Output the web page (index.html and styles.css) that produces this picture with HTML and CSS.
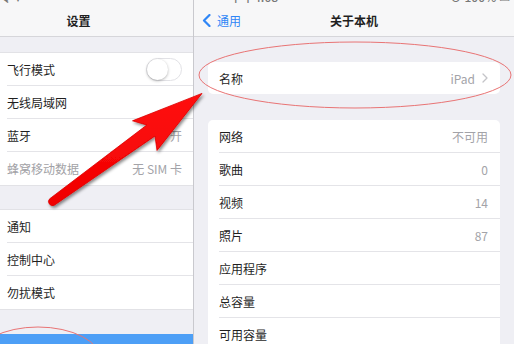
FILE: index.html
```html
<!DOCTYPE html>
<html lang="zh-CN">
<head>
    <meta charset="UTF-8">
    <meta name="viewport" content="width=device-width, initial-scale=1.0">
    <title>关于本机</title>
    <link rel="stylesheet" href="styles.css">
</head>
<body>
    <div class="screen">
        <!-- Settings sidebar -->
        <div class="sidebar">
            <div class="topbar">
                <div class="status"><span class="status-left">令 ▾</span></div>
                <div class="title">设置</div>
            </div>

            <div class="group first">
                <div class="row"><div class="row-inner"><span>飞行模式</span><span class="toggle"><span class="knob"></span></span></div></div>
                <div class="row"><div class="row-inner"><span>无线局域网</span></div></div>
                <div class="row"><div class="row-inner"><span>蓝牙</span><span class="value">开</span></div></div>
                <div class="row"><div class="row-inner last"><span class="muted">蜂窝移动数据</span><span class="value">无 SIM 卡</span></div></div>
            </div>

            <div class="group">
                <div class="row"><div class="row-inner"><span>通知</span></div></div>
                <div class="row"><div class="row-inner"><span>控制中心</span></div></div>
                <div class="row"><div class="row-inner last"><span>勿扰模式</span></div></div>
            </div>

            <div class="selected-row"></div>
        </div>

        <!-- Detail pane -->
        <div class="detail">
            <div class="topbar">
                <div class="status"><span class="status-time">下午4:08</span><span class="status-right">⊙ 100% ▭</span></div>
                <div class="title-row">
                    <span class="back">
                        <svg width="9" height="13" viewBox="0 0 9 13"><path d="M7.5 1 L2 6.5 L7.5 12" fill="none" stroke="#2f86f6" stroke-width="2.2" stroke-linecap="round" stroke-linejoin="round"/></svg>
                        通用
                    </span>
                    <span class="title">关于本机</span>
                </div>
            </div>

            <div class="card name-card">
                <div class="item"><div class="item-inner last">
                    <span>名称</span>
                    <span class="value">iPad
                        <svg class="chevron" width="6" height="10" viewBox="0 0 6 10"><path d="M1 1 L5 5 L1 9" fill="none" stroke="#c4c4c8" stroke-width="1.3" stroke-linecap="round" stroke-linejoin="round"/></svg>
                    </span>
                </div></div>
            </div>

            <div class="card info-card">
                <div class="item"><div class="item-inner"><span>网络</span><span class="value">不可用</span></div></div>
                <div class="item"><div class="item-inner"><span>歌曲</span><span class="value">0</span></div></div>
                <div class="item"><div class="item-inner"><span>视频</span><span class="value">14</span></div></div>
                <div class="item"><div class="item-inner"><span>照片</span><span class="value">87</span></div></div>
                <div class="item"><div class="item-inner"><span>应用程序</span><span class="value"></span></div></div>
                <div class="item"><div class="item-inner"><span>总容量</span><span class="value"></span></div></div>
                <div class="item"><div class="item-inner last"><span>可用容量</span><span class="value"></span></div></div>
            </div>
        </div>

        <!-- Annotation drawn over the screenshot -->
        <svg class="markup" width="514" height="344" viewBox="0 0 514 344">
            <defs>
                <filter id="shade" x="-10%" y="-10%" width="120%" height="130%">
                    <feDropShadow dx="1.5" dy="2" stdDeviation="1.6" flood-color="#000" flood-opacity="0.45"/>
                </filter>
                <linearGradient id="red" x1="0" y1="0" x2="0" y2="1">
                    <stop offset="0" stop-color="#ff1010"/>
                    <stop offset="1" stop-color="#f00000"/>
                </linearGradient>
            </defs>
            <ellipse cx="355" cy="75" rx="156" ry="33" fill="none" stroke="#e97474" stroke-width="1"/>
            <ellipse cx="38" cy="360" rx="63" ry="33" fill="none" stroke="#e97474" stroke-width="1"/>
            <path d="M49.7 198.8 L146.8 125 L132.5 120.8 L202 93.4 L157 150.5 L155 136 L54.3 205.2 A4 4 0 0 1 49.7 198.8 Z"
                  fill="url(#red)" stroke="#dc0000" stroke-width="0.8" stroke-linejoin="round" filter="url(#shade)"/>
        </svg>
    </div>
</body>
</html>
```

FILE: styles.css
```css
body {
    margin: 0;
    font-family: "Noto Sans CJK SC", "Noto Sans", sans-serif;
    font-size: 12px;
    color: #1f1f1f;
    background-color: #efeff4;
}

.screen {
    position: relative;
    width: 514px;
    height: 344px;
    overflow: hidden;
    display: flex;
}

/* top bars */
.topbar {
    height: 36px;
    background-color: #f7f7f8;
    border-bottom: 1px solid #d6d6da;
}

.status {
    height: 5px;
    overflow: hidden;
    position: relative;
    font-size: 12px;
    font-weight: 500;
    color: #777;
    line-height: 14px;
}

.status span {
    display: block;
    margin-top: -10px;
}

.status-time {
    position: absolute;
    left: 36px;
    top: 0;
}

.status-right {
    position: absolute;
    right: 4px;
    top: 0;
}

.title {
    text-align: center;
    line-height: 31px;
    font-weight: 600;
    font-size: 12px;
}

/* sidebar */
.sidebar {
    width: 193px;
    flex-shrink: 0;
    border-right: 1px solid #c9c9ce;
    background-color: #efeff4;
}

.sidebar .title {
    padding-right: 36px;
}

.group {
    background-color: #fff;
    margin-top: 25px;
    box-shadow: 0 -1px 0 #e2e2e6, 0 1px 0 #e2e2e6;
}

.group.first {
    margin-top: 16px;
}

.row {
    padding-left: 7px;
}

.row-inner {
    height: 32px;
    border-bottom: 1px solid #e4e4e8;
    display: flex;
    align-items: center;
    justify-content: space-between;
    padding-right: 11px;
}

.row-inner.last {
    height: 33px;
    border-bottom: none;
}

.muted {
    color: #a2a2a6;
}

.value {
    color: #a3a3a8;
    display: flex;
    align-items: center;
    gap: 7px;
}

.toggle {
    width: 34px;
    height: 21px;
    border: 1px solid #e2e2e6;
    border-radius: 12px;
    background-color: #fff;
    position: relative;
}

.knob {
    position: absolute;
    left: 0;
    top: 0;
    width: 21px;
    height: 21px;
    border-radius: 50%;
    background-color: #fff;
    box-shadow: 0 1px 3px rgba(0, 0, 0, 0.3);
}

.selected-row {
    margin-top: 25px;
    height: 40px;
    background-color: #4d9ff6;
}

/* detail pane */
.detail {
    flex: 1;
    background-color: #efeff4;
}

.title-row {
    position: relative;
    height: 31px;
    display: flex;
    align-items: center;
    justify-content: center;
}

.back {
    position: absolute;
    left: 8px;
    top: 0;
    line-height: 31px;
    color: #2f86f6;
    display: flex;
    align-items: center;
    gap: 6px;
}

.card {
    background-color: #fff;
    margin: 0 14px;
    border-radius: 5px;
}

.name-card {
    margin-top: 25px;
}

.info-card {
    margin-top: 26px;
}

.item {
    padding-left: 11px;
}

.item-inner {
    height: 32px;
    border-bottom: 1px solid #e4e4e8;
    display: flex;
    align-items: center;
    justify-content: space-between;
    padding-right: 12px;
}

.item-inner.last {
    height: 32px;
    border-bottom: none;
}

.chevron {
    display: block;
}

.markup {
    position: absolute;
    left: 0;
    top: 0;
    pointer-events: none;
}
```
